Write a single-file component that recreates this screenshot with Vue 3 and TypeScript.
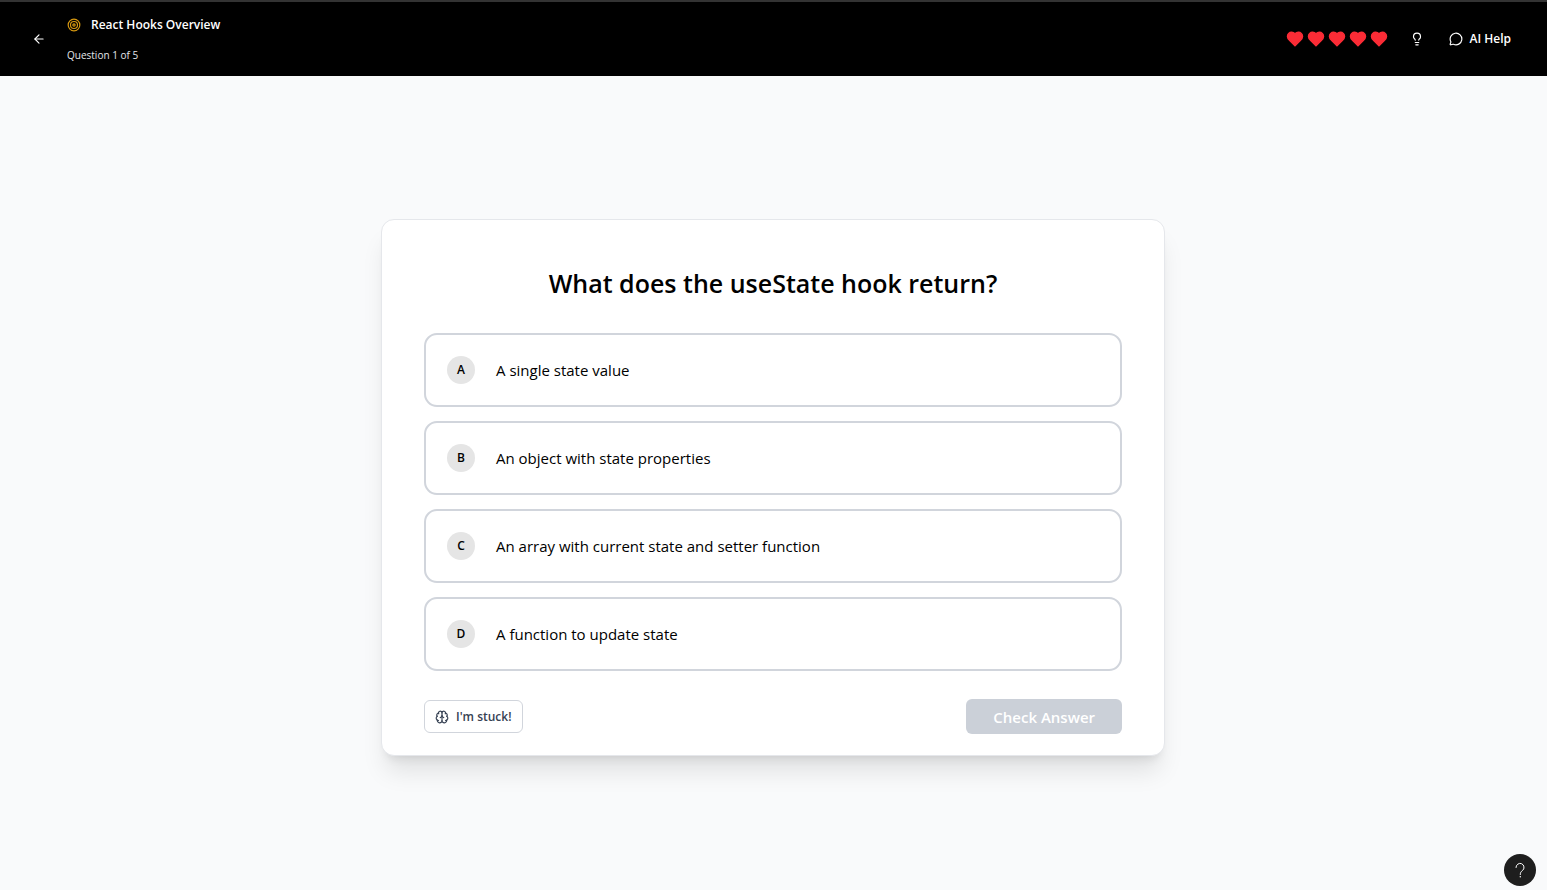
<script setup lang="ts">
import { ref } from 'vue'

interface Choice {
  letter: string
  text: string
}

const lives = 5
const choices: Choice[] = [
  { letter: 'A', text: 'A single state value' },
  { letter: 'B', text: 'An object with state properties' },
  { letter: 'C', text: 'An array with current state and setter function' },
  { letter: 'D', text: 'A function to update state' },
]
const selected = ref<string | null>(null)
</script>

<template>
  <div class="page">
    <header class="topbar">
      <div class="lesson">
        <button class="icon-button" type="button" aria-label="Back">
          <svg class="icon" viewBox="0 0 24 24"><path d="m12 19-7-7 7-7" /><path d="M19 12H5" /></svg>
        </button>
        <div class="lesson-text">
          <div class="lesson-title">
            <svg class="icon target" viewBox="0 0 24 24">
              <circle cx="12" cy="12" r="10" /><circle cx="12" cy="12" r="6" /><circle cx="12" cy="12" r="2" />
            </svg>
            <h1>React Hooks Overview</h1>
          </div>
          <p class="progress">Question 1 of 5</p>
        </div>
      </div>
      <div class="tools">
        <div class="hearts" role="img" aria-label="Lives">
          <svg v-for="n in lives" :key="n" class="heart" viewBox="0 0 24 24">
            <path d="M19 14c1.49-1.46 3-3.21 3-5.5A5.5 5.5 0 0 0 16.5 3c-1.76 0-3 .5-4.5 2-1.5-1.5-2.74-2-4.5-2A5.5 5.5 0 0 0 2 8.5c0 2.300 1.500 4.050 3 5.500l7 7Z" />
          </svg>
        </div>
        <button class="icon-button" type="button" aria-label="Hint">
          <svg class="icon" viewBox="0 0 24 24">
            <path d="M15 14c.2-1 .7-1.7 1.5-2.5 1-.9 1.5-2.2 1.5-3.5A6 6 0 0 0 6 8c0 1 .2 2.2 1.5 3.5.7.7 1.3 1.5 1.5 2.5" />
            <path d="M9 18h6" /><path d="M10 22h4" />
          </svg>
        </button>
        <button class="ai-button" type="button">
          <svg class="icon" viewBox="0 0 24 24">
            <path d="M2.992 16.342a2 2 0 0 1 .094 1.167l-1.065 3.29a1 1 0 0 0 1.236 1.168l3.413-.998a2 2 0 0 1 1.099.092 10 10 0 1 0-4.777-4.719" />
          </svg>
          AI Help
        </button>
      </div>
    </header>

    <main class="stage">
      <section class="card">
        <h2>What does the useState hook return?</h2>
        <div class="choices">
          <button
            v-for="choice in choices"
            :key="choice.letter"
            type="button"
            class="choice"
            :class="{ active: selected === choice.letter }"
            @click="selected = choice.letter"
          >
            <span class="letter">{{ choice.letter }}</span>
            <span>{{ choice.text }}</span>
          </button>
        </div>
        <div class="actions">
          <button class="stuck" type="button">
            <svg class="icon" viewBox="0 0 24 24">
              <path d="M12 18V5" />
              <path d="M15 13a4.17 4.17 0 0 1-3-4 4.17 4.17 0 0 1-3 4" />
              <path d="M17.598 6.5A3 3 0 1 0 12 5a3 3 0 1 0-5.598 1.5" />
              <path d="M17.997 5.125a4 4 0 0 1 2.526 5.77" />
              <path d="M18 18a4 4 0 0 0 2-7.464" />
              <path d="M19.967 17.483A4 4 0 1 1 12 18a4 4 0 1 1-7.967-.517" />
              <path d="M6 18a4 4 0 0 1-2-7.464" />
              <path d="M6.003 5.125a4 4 0 0 0-2.526 5.77" />
            </svg>
            I'm stuck!
          </button>
          <button class="check" type="button" :disabled="selected === null">Check Answer</button>
        </div>
      </section>
    </main>

    <button class="help" type="button" aria-label="Help">
      <svg viewBox="0 0 32 32">
        <path d="M12 13.500a4 4 0 1 1 6.500 3c-1.500 1.200-2.200 1.900-2.200 4" />
        <circle cx="16.300" cy="22.800" r="0.700" />
      </svg>
    </button>
  </div>
</template>

<style>
body {
  margin: 0;
}
</style>

<style scoped>
.page {
  display: flex;
  flex-direction: column;
  min-height: 100vh;
  background: #f9fafb;
  color: #000;
  font-family: "Segoe UI", "Open Sans", "Noto Sans", sans-serif;
}

h1,
h2,
p {
  margin: 0;
}

button {
  margin: 0;
  padding: 0;
  border: 0;
  background: none;
  color: inherit;
  font: inherit;
  cursor: pointer;
}

.icon {
  display: block;
  flex: none;
  width: 14px;
  height: 14px;
  fill: none;
  stroke: currentColor;
  stroke-width: 2;
  stroke-linecap: round;
  stroke-linejoin: round;
}

.topbar {
  display: flex;
  align-items: center;
  justify-content: space-between;
  box-sizing: border-box;
  height: 76px;
  padding: 0 36px 0 21px;
  border-top: 2px solid #333;
  background: #000;
  color: #fff;
}

.lesson {
  display: flex;
  align-items: center;
  gap: 10px;
}

.icon-button {
  display: flex;
  align-items: center;
  justify-content: center;
  width: 36px;
  height: 32px;
}

.lesson-title {
  display: flex;
  align-items: center;
  gap: 10px;
  height: 32px;
}

.target {
  color: #d99a10;
}

h1 {
  font-size: 12px;
  line-height: 18px;
  font-weight: 600;
}

.progress {
  font-size: 10px;
  line-height: 28px;
  color: #e5e7eb;
}

.tools {
  display: flex;
  align-items: center;
}

.hearts {
  display: flex;
  gap: 3px;
  margin-right: 11px;
}

.heart {
  display: block;
  width: 18px;
  height: 18px;
  fill: #fb2c36;
  stroke: #fb2c36;
  stroke-width: 2;
}

.ai-button {
  display: flex;
  align-items: center;
  gap: 7px;
  height: 32px;
  margin-left: 14px;
  font-size: 12px;
  line-height: 18px;
  font-weight: 600;
}

.stage {
  display: flex;
  flex: 1;
  align-items: center;
  justify-content: center;
  padding: 30px 22px 21px 21px;
}

.card {
  box-sizing: border-box;
  width: 100%;
  max-width: 784px;
  padding: 42px 42px 21px;
  border: 1px solid #e5e7eb;
  border-radius: 13px;
  background: #fff;
  box-shadow: 0 20px 25px -5px rgba(0, 0, 0, 0.1), 0 8px 10px -6px rgba(0, 0, 0, 0.1);
}

h2 {
  margin-bottom: 28px;
  font-size: 25px;
  line-height: 43px;
  font-weight: 600;
  text-align: center;
}

.choices {
  display: grid;
  gap: 14px;
}

.choice {
  display: flex;
  align-items: center;
  gap: 21px;
  min-height: 74px;
  padding: 0 21px;
  border: 2px solid #d1d5dc;
  border-radius: 13px;
  background: #fff;
  font-size: 15px;
  line-height: 18px;
  text-align: left;
}

.choice.active {
  border-color: #000;
}

.letter {
  display: flex;
  flex: none;
  align-items: center;
  justify-content: center;
  width: 28px;
  height: 28px;
  border-radius: 50%;
  background: #e5e5e5;
  font-size: 12px;
  font-weight: 600;
}

.actions {
  display: flex;
  align-items: center;
  justify-content: space-between;
  margin-top: 28px;
}

.stuck {
  display: flex;
  align-items: center;
  gap: 7px;
  height: 33px;
  padding: 0 10px;
  border: 1px solid #d1d5dc;
  border-radius: 6px;
  background: #fff;
  color: #364153;
  font-size: 12px;
  line-height: 18px;
  font-weight: 600;
}

.check {
  height: 35px;
  padding: 0 27px;
  border-radius: 6px;
  background: #000;
  color: #fff;
  font-size: 15px;
  line-height: 18px;
  font-weight: 600;
}

.check:disabled {
  background: #cbd0d8;
  cursor: default;
}

.help {
  position: fixed;
  right: 11px;
  bottom: 4px;
  width: 32px;
  height: 32px;
  border-radius: 50%;
  background: #1e1e1e;
}

.help svg {
  display: block;
  width: 32px;
  height: 32px;
  fill: none;
  stroke: #fff;
  stroke-width: 1;
  stroke-linecap: round;
}

.help circle {
  fill: #fff;
  stroke: none;
}
</style>
